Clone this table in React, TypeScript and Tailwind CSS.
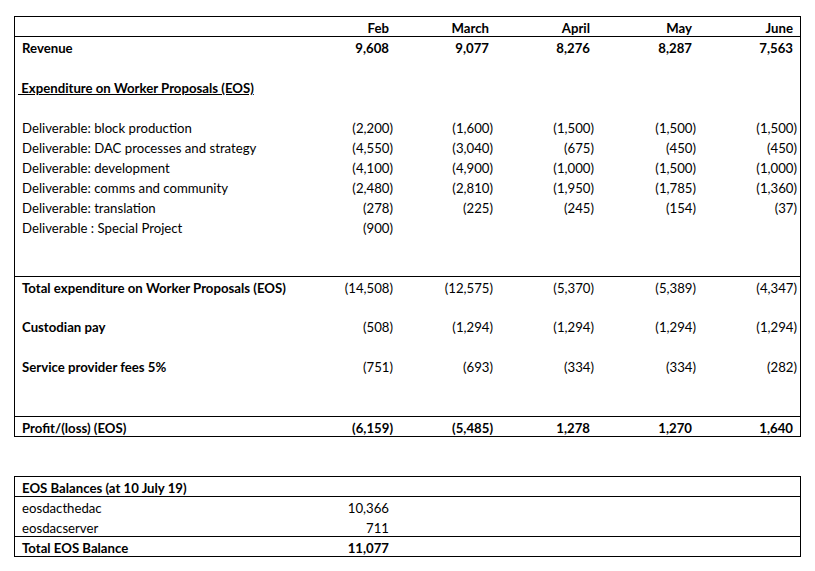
const months = ['Feb', 'March', 'April', 'May', 'June'];

type Row = {
  label?: string;
  values?: (number | null)[];
  labelBold?: boolean;
  valuesBold?: boolean;
  underline?: boolean;
  h?: string;
  topLine?: boolean;
};

const rows: Row[] = [
  { label: 'Revenue', values: [9608, 9077, 8276, 8287, 7563], labelBold: true, valuesBold: true },
  {},
  { label: 'Expenditure on Worker Proposals (EOS)', labelBold: true, underline: true },
  {},
  { label: 'Deliverable: block production', values: [-2200, -1600, -1500, -1500, -1500] },
  { label: 'Deliverable: DAC processes and strategy', values: [-4550, -3040, -675, -450, -450] },
  { label: 'Deliverable: development', values: [-4100, -4900, -1000, -1500, -1000] },
  { label: 'Deliverable: comms and community', values: [-2480, -2810, -1950, -1785, -1360] },
  { label: 'Deliverable: translation', values: [-278, -225, -245, -154, -37] },
  { label: 'Deliverable : Special Project', values: [-900, null, null, null, null] },
  {},
  { h: 'h-[19px]' },
  { label: 'Total expenditure on Worker Proposals (EOS)', values: [-14508, -12575, -5370, -5389, -4347], labelBold: true, topLine: true },
  {},
  { label: 'Custodian pay', values: [-508, -1294, -1294, -1294, -1294], labelBold: true },
  {},
  { label: 'Service provider fees 5%', values: [-751, -693, -334, -334, -282], labelBold: true },
  {},
  {},
  { label: 'Profit/(loss) (EOS)', values: [-6159, -5485, 1278, 1270, 1640], labelBold: true, valuesBold: true, topLine: true },
];

const cols = 'grid grid-cols-[278px_100px_100px_101px_102px_101px]';

function Num({ v, bold }: { v: number | null; bold?: boolean }) {
  if (v === null) return <div />;
  const s = Math.abs(v).toLocaleString('en-US');
  return (
    <div className={`text-right ${bold ? 'font-bold' : ''}`}>
      {v < 0 ? `(${s})` : <span className="pr-[4px]">{s}</span>}
    </div>
  );
}

export default function App() {
  return (
    <div className="min-h-screen bg-white pt-[16px] pl-[14px] text-[13.2px] text-black" style={{ fontFamily: 'Lato, "Liberation Sans", sans-serif' }}>
      <div className="w-[787px] border border-black">
        <div className={`${cols} h-5 border-b border-black leading-[22px] font-bold`}>
          <div />
          {months.map((m) => (
            <div key={m} className="text-right pr-[4px]">{m}</div>
          ))}
        </div>
        {rows.map((r, i) => (
          <div key={i} className={`${cols} ${r.h ?? 'h-5'} leading-[22px] ${r.topLine ? 'border-t border-black' : ''}`}>
            <div className={`pl-[7px] whitespace-nowrap ${r.labelBold ? 'font-bold' : ''}`}>
              {r.underline ? <span className="-ml-[4px] underline">{'\u00a0' + r.label}</span> : r.label}
            </div>
            {r.values?.map((v, j) => <Num key={j} v={v} bold={r.valuesBold} />)}
          </div>
        ))}
      </div>

      <div className="mt-[39px] w-[787px] border border-black">
        <div className={`${cols} h-5 border-b border-black leading-[22px] font-bold`}>
          <div className="pl-[7px] whitespace-nowrap">EOS Balances (at 10 July 19)</div>
        </div>
        <div className={`${cols} h-5 leading-[22px]`}>
          <div className="pl-[7px]">eosdacthedac</div>
          <Num v={10366} />
        </div>
        <div className={`${cols} h-[19px] leading-[22px]`}>
          <div className="pl-[7px]">eosdacserver</div>
          <Num v={711} />
        </div>
        <div className={`${cols} h-5 border-t border-black leading-[22px] font-bold`}>
          <div className="pl-[7px]">Total EOS Balance</div>
          <Num v={11077} bold />
        </div>
      </div>
    </div>
  );
}
